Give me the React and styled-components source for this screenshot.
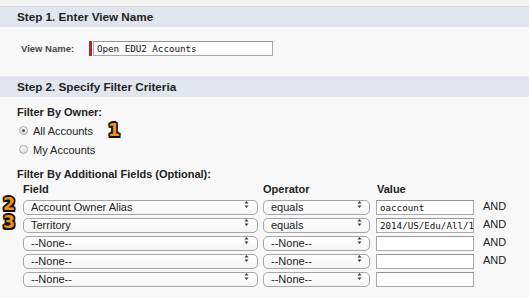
import React from 'react'
import styled, { createGlobalStyle } from 'styled-components'

const GlobalStyle = createGlobalStyle`
  body {
    margin: 0;
    background: #f8f8f8;
    font-family: 'Liberation Sans', Arial, sans-serif;
    color: #222;
  }
`

const Page = styled.div`
  width: 529px;
  height: 298px;
  overflow: hidden;
  background: #f8f8f8;
`

const TopStrip = styled.div`
  height: 6px;
  background: #f3f3f3;
  border-bottom: 1px solid #d9d9d9;
`

const SectionHeader = styled.div`
  height: 20px;
  line-height: 20px;
  padding-left: 17px;
  background: #e2e5ee;
  font-size: 11.7px;
  font-weight: bold;
  color: #1e1e1e;
  border-top: ${p => (p.$divider ? '1px solid #ebecf1' : 'none')};
`

const NameBody = styled.div`
  height: 49px;
  box-sizing: border-box;
  padding: 14px 0 0 21px;
  display: flex;
  align-items: flex-start;
`

const FieldLabel = styled.label`
  width: 68px;
  font-size: 9.5px;
  font-weight: bold;
  color: #4a4a4a;
  line-height: 15px;
`

const Required = styled.div`
  display: flex;
  height: 15px;
`

const RequiredBar = styled.span`
  width: 3px;
  margin-right: 1px;
  background: #b5252b;
`

const TextBox = styled.input`
  box-sizing: border-box;
  width: ${p => p.$width}px;
  height: 15px;
  margin: 0;
  padding: 0 0 0 3px;
  border: 1px solid #a9a9a9;
  border-top-color: #959595;
  background: #fff;
  font-family: 'DejaVu Sans Mono', monospace;
  font-size: 9.2px;
  color: #111;
  outline: none;
`

const FilterBody = styled.div`
  padding: 8px 0 0 17px;
`

const GroupLabel = styled.div`
  font-size: 11px;
  font-weight: bold;
  line-height: 14px;
  color: #222;
  margin-top: ${p => p.$gap || 0}px;
`

const RadioRow = styled.label`
  display: flex;
  align-items: center;
  height: 19px;
  padding-left: 2px;
  font-size: 11px;
  color: #222;
  margin-top: ${p => p.$gap || 0}px;
`

const RadioDot = styled.span`
  box-sizing: border-box;
  width: 9px;
  height: 9px;
  margin-right: 5px;
  border-radius: 50%;
  border: 1px solid #a6a6a6;
  background: linear-gradient(#fdfdfd, #dcdcdc);
  display: flex;
  align-items: center;
  justify-content: center;
  &::after {
    content: '';
    width: 3px;
    height: 3px;
    border-radius: 50%;
    background: ${p => (p.$checked ? '#555' : 'transparent')};
  }
`

const Badge = styled.span`
  display: inline-block;
  font-family: 'DejaVu Sans', sans-serif;
  font-weight: 900;
  font-size: 17.5px;
  line-height: 17px;
  color: #f39118;
  margin-left: ${p => p.$offset || 0}px;
  text-shadow:
    -1.5px -1.5px 0 #111, 1.5px -1.5px 0 #111, -1.5px 1.5px 0 #111, 1.5px 1.5px 0 #111,
    0 -1.7px 0 #111, 0 1.7px 0 #111, -1.7px 0 0 #111, 1.7px 0 0 #111;
`

const FilterGrid = styled.div`
  display: grid;
  grid-template-columns: 23px 240px 113px 107px auto;
  grid-template-rows: 13px;
  grid-auto-rows: 15px;
  row-gap: 3px;
`

const ColHead = styled.div`
  font-size: 11px;
  font-weight: bold;
  line-height: 16px;
  color: #222;
  padding-left: ${p => p.$indent || 0}px;
`

const BadgeCell = styled.div`
  display: flex;
  align-items: center;
  padding-left: 3px;
`

const SelectWrap = styled.div`
  position: relative;
  width: ${p => p.$width}px;
  height: 15px;
`

const NativeSelect = styled.select`
  appearance: none;
  box-sizing: border-box;
  width: 100%;
  height: 15px;
  margin: 0;
  padding: 0 0 0 7px;
  border: 1px solid #a6a6a6;
  border-radius: 5px;
  background: linear-gradient(#ffffff, #f4f4f4);
  font-family: 'Liberation Sans', Arial, sans-serif;
  font-size: 11px;
  line-height: 13px;
  color: #222;
  outline: none;
`

const Arrows = styled.svg`
  position: absolute;
  right: ${p => p.$right}px;
  top: 3px;
  pointer-events: none;
`

const AndText = styled.div`
  font-size: 11px;
  line-height: 13px;
  padding-top: 3px;
  color: #222;
`

const fieldRows = [
  { badge: '2', field: 'Account Owner Alias', op: 'equals', value: 'oaccount', and: true },
  { badge: '3', field: 'Territory', op: 'equals', value: '2014/US/Edu/All/1', and: true },
  { field: '--None--', op: '--None--', value: '', and: true },
  { field: '--None--', op: '--None--', value: '', and: true },
  { field: '--None--', op: '--None--', value: '', and: false },
]

const Select = ({ width, right, value }) => (
  <SelectWrap $width={width}>
    <NativeSelect defaultValue={value}>
      <option>{value}</option>
    </NativeSelect>
    <Arrows $right={right} width='5' height='9' viewBox='0 0 5 9'>
      <path d='M0.5 3.5 L2.5 1 L4.5 3.5 Z M0.5 5.5 L2.5 8 L4.5 5.5 Z' fill='#3a3a3a' />
    </Arrows>
  </SelectWrap>
)

export default function App() {
  return (
    <Page>
      <GlobalStyle />
      <TopStrip />
      <SectionHeader>Step 1. Enter View Name</SectionHeader>
      <NameBody>
        <FieldLabel>View Name:</FieldLabel>
        <Required>
          <RequiredBar />
          <TextBox $width={180} defaultValue='Open EDU2 Accounts' />
        </Required>
      </NameBody>
      <SectionHeader $divider>Step 2. Specify Filter Criteria</SectionHeader>
      <FilterBody>
        <GroupLabel>Filter By Owner:</GroupLabel>
        <RadioRow $gap={2}>
          <RadioDot $checked />
          All Accounts
          <Badge $offset={15}>1</Badge>
        </RadioRow>
        <RadioRow>
          <RadioDot />
          My Accounts
        </RadioRow>
        <GroupLabel $gap={8}>Filter By Additional Fields (Optional):</GroupLabel>
      </FilterBody>
      <FilterGrid>
        <div />
        <ColHead>Field</ColHead>
        <ColHead>Operator</ColHead>
        <ColHead $indent={1}>Value</ColHead>
        <div />
        {fieldRows.map((r, i) => (
          <React.Fragment key={`r${i}`}>
            <BadgeCell>{r.badge ? <Badge>{r.badge}</Badge> : null}</BadgeCell>
            <Select width={235} right={9} value={r.field} />
            <Select width={107} right={8} value={r.op} />
            <div><TextBox $width={98} defaultValue={r.value} /></div>
            {r.and ? <AndText>AND</AndText> : <div />}
          </React.Fragment>
        ))}
      </FilterGrid>
    </Page>
  )
}
